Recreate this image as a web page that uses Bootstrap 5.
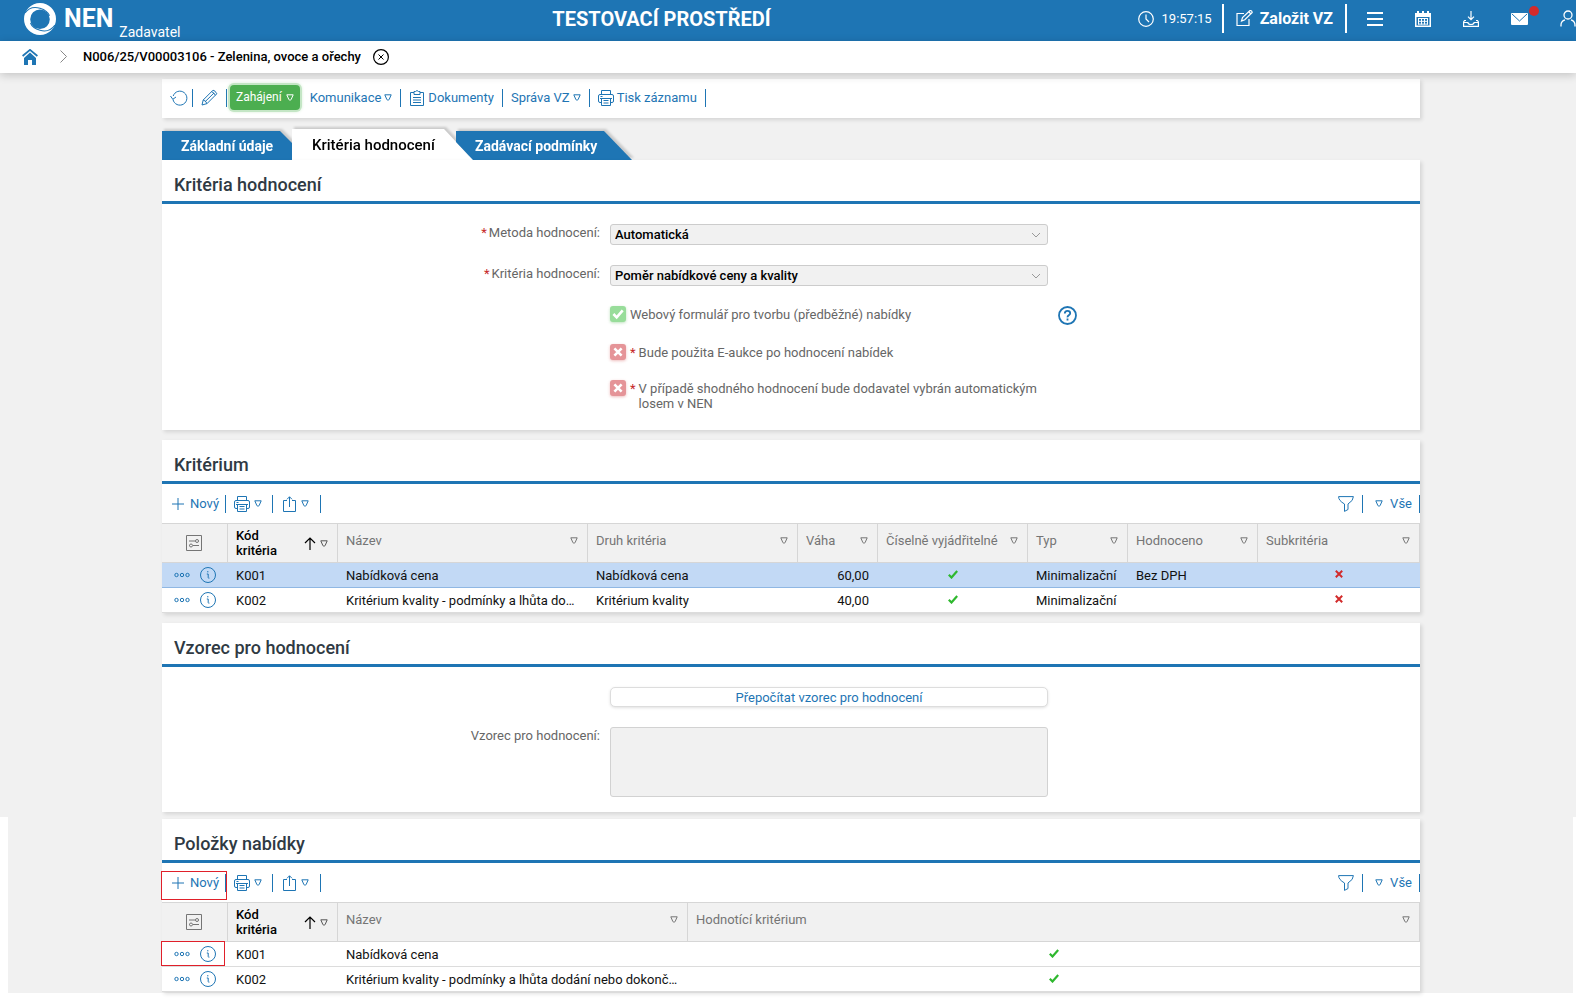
<!DOCTYPE html>
<html lang="cs">
<head>
<meta charset="utf-8">
<meta name="viewport" content="width=device-width, initial-scale=1">
<title>NEN - Kritéria hodnocení</title>
<link href="https://cdn.jsdelivr.net/npm/bootstrap@5.3.0/dist/css/bootstrap.min.css" rel="stylesheet">
<style>
:root{--nen-blue:#1e75b4;--nen-gray:#f1f1f1;--nen-label:#666}
body{font-family:Roboto,"Liberation Sans",sans-serif;font-size:13px;line-height:15px;color:#111;background:#fff;overflow-x:hidden}
svg{display:block;flex:none;fill:none;stroke:currentColor}
a{color:inherit;text-decoration:none}
.bare{background:none;border:0;padding:0;color:inherit;font:inherit;display:flex;align-items:center}
.topbar{background:var(--nen-blue);color:#fff;height:41px;padding-left:24px}
.brand{font-size:25px;line-height:32px;font-weight:700;margin-top:-4px}
.logo{margin-top:-4px}
.role{font-size:14px;line-height:16px;padding-top:22px;margin-left:6px}
.env{font-size:20px;line-height:24px;font-weight:700;padding:0 0 4px 5px}
.rule-w{width:2px;height:29px;background:#fff}
.clock{gap:8px;margin-right:10px}
.create{font-size:16px;line-height:20px;font-weight:700;gap:7px;margin:0 12px}
.tools{gap:32px;margin-left:20px}
.alert-dot{position:absolute;width:10px;height:10px;border-radius:50%;background:#d32a2a;left:18px;top:-7px}
.crumbs{height:32px;padding:0 0 1px 22px;background:#fff;position:relative;z-index:2;box-shadow:0 2px 10px rgba(0,0,0,.2);color:#000}
.crumbs strong{font-weight:500;margin-right:12px}
.chev{color:#888;margin:0 16px 0 22px}
.upper{background:var(--nen-gray);padding:6px 0 5px 6px}
.lower{background:var(--nen-gray);margin:0 3px 5px 8px;padding:2px 0 1px 1px}
.page{max-width:1258px;margin:0 auto}
.panel{background:#fff;box-shadow:2px 2px 4px rgba(0,0,0,.12)}
.gap-below{margin-bottom:10px}
.panel h2{font-size:18px;line-height:24px;font-weight:500;color:#2f3a43;margin:0;padding:13px 12px 4px;border-bottom:3px solid var(--nen-blue)}
.blue{color:var(--nen-blue)}
.sep{width:1px;height:18px;background:var(--nen-blue);flex:none}
.actions{height:39px;padding:0 8px 2px}
.actions .bare{gap:3px}
.start{background:#4cae50;color:#fff;border:0;border-radius:4px;height:25px;padding:0 6px;gap:4px;font-size:12px;line-height:15px;box-shadow:0 0 0 2px #c4e6c5,0 0 4px #8ccf8e;margin:0 10px 0 3px}
.start:hover{background:#43a047;color:#fff}
.tabs{margin-top:11px;filter:drop-shadow(2px -2px 1px rgba(0,0,0,.16))}
.tab{height:29px;background:var(--nen-blue);color:#fff;font-size:14px;font-weight:700;line-height:29px;border:0;padding:1px 0 0 19px;text-align:left}
.tab-a{width:130px;clip-path:polygon(0 0,118px 0,130px 12px,130px 100%,0 100%)}
.tab-b{height:31px;background:#fff;color:#000;font-size:15px;font-weight:500;width:181px;padding-left:20px;line-height:31px;clip-path:polygon(0 0,152px 0,100% 100%,0 100%)}
.tab-c{width:176px;margin-left:-17px;clip-path:polygon(0 0,148px 0,100% 100%,17px 100%,0 11px)}
.form-lines{display:grid;grid-template-columns:438fr 438fr 362fr;column-gap:10px;color:var(--nen-label);padding-top:20px}
.form-lines label.cap{text-align:right;padding-top:1px}
.form-lines label.cap-low{padding-top:5px}
.form-lines .flag{display:flex;gap:4px;align-items:flex-start}
.flag label{display:flex;gap:3px;padding-top:1px}
.req{color:#c62828}
.cap .req{margin-right:2px}
.form-select.pick{height:21px;padding:0 20px 0 4px;font-size:13px;line-height:17px;font-weight:500;color:#000;background-color:#f1f1f1;border:1px solid #ccc;border-radius:3px;background-position:right 6px center;background-size:10px 6px;--bs-form-select-bg-img:url("data:image/svg+xml,%3Csvg xmlns='http://www.w3.org/2000/svg' viewBox='0 0 10 6'%3E%3Cpath fill='none' stroke='%23999' d='M1 1l4 4 4-4'/%3E%3C/svg%3E")}
.tick{appearance:none;width:16px;height:16px;margin:0;flex:none;border-radius:3px;background:#e59498 url("data:image/svg+xml,%3Csvg xmlns='http://www.w3.org/2000/svg' viewBox='0 0 16 16'%3E%3Cpath fill='none' stroke='%23fff' stroke-width='2.6' d='M4.4 4.4l7.2 7.2M11.6 4.4l-7.2 7.2'/%3E%3C/svg%3E");box-shadow:0 1px 3px rgba(200,40,40,.3)}
.tick:checked{background:#98dd9a url("data:image/svg+xml,%3Csvg xmlns='http://www.w3.org/2000/svg' viewBox='0 0 16 16'%3E%3Cpath fill='none' stroke='%23fff' stroke-width='2.6' d='M3.4 8l3.3 3.4 6-7'/%3E%3C/svg%3E");box-shadow:0 1px 3px rgba(40,160,40,.3)}
.recalc{height:20px;font-size:13px;line-height:15px;padding:0;color:var(--nen-blue);border:1px solid #ddd;border-radius:5px;background:#fff;box-shadow:0 1px 3px rgba(0,0,0,.12)}
.formula{height:70px;background:#f1f1f1;border:1px solid #d2d2d2;border-radius:3px;resize:none;padding:4px}
.grid-bar{height:39px}
.grid-bar .add{gap:6px;padding:0 6px 0 10px}
.grid-bar .view{gap:7px;padding:0 7px 0 4px}
.grid-t{width:100%;table-layout:fixed;border-collapse:separate;border-spacing:0;color:#111}
.grid-t th{background:var(--nen-gray);height:40px;border:solid #d6d6d6;border-width:1px 1px 1px 0;padding:0 9px 0 8px;font-weight:400;color:#757575}
.grid-t th.k{color:#000;font-weight:500}
.grid-t td{height:25px;border-bottom:1px solid #dcdcdc;padding:0 9px 0 8px;white-space:nowrap;overflow:hidden}
.grid-t tr.sel td{background:#c2d9f5;border-color:#8fb7e3}
.head{display:flex;align-items:center;justify-content:space-between;padding-bottom:5px;white-space:nowrap}
.row-tools{display:flex;align-items:center;justify-content:flex-end;gap:10px;padding-right:3px;color:var(--nen-blue)}
.yes,.no{margin:0 auto;padding-bottom:2px;box-sizing:content-box}
.yes{color:#2eb82e}
.no{color:#d22b2b}
.mark-box{position:absolute;border:1px solid #e0202a;pointer-events:none}
.m1{left:-1px;top:52px;width:66px;height:29px}
.m2{left:-1px;top:122px;width:64px;height:25px}
</style>
</head>
<body>
<svg width="0" height="0" class="position-absolute">
<symbol id="tri" viewBox="0 0 8 7"><path d="M.8.8h6.4L5.2 5.4q-.2.6-.7.6h-1q-.5 0-.7-.6z"/></symbol>
<symbol id="printer" viewBox="0 0 16 16"><path d="M3.500 4.500v-4h9v4M3.500 12.500h-1.500q-1.500 0-1.500-1.500v-5q0-1.500 1.500-1.500h12q1.500 0 1.500 1.500v5q0 1.500-1.500 1.500h-1.500M3.500 8.500h9v7h-9zM2 8.500h12M2.500 6.500h2M5.500 10.500h5M5.500 13h5"/></symbol>
<symbol id="share" viewBox="0 0 14 16"><path d="M4 4.500H.5v11h12v-11H9M6.500 11V.8M4 3.300L6.500.8 9 3.300"/></symbol>
<symbol id="plus" viewBox="0 0 12 12"><path d="M6 0v12M0 6h12"/></symbol>
<symbol id="funnel" viewBox="0 0 16 16"><path d="M.6.6h14.800q.2 3.900-5.400 7.400v5.500L6.500 15.400V8Q.4 4.500.6.6z"/></symbol>
<symbol id="cols" viewBox="0 0 16 16"><path d="M.5.5h15v15H.5zM3 6h6.500M13 6h-.5M3 10.500h.5M7 10.500h6"/><circle cx="11" cy="6" r="1.500"/><circle cx="5" cy="10.500" r="1.500"/></symbol>
<symbol id="arrow" viewBox="0 0 12 13"><path d="M6 13V1M1 6l5-5 5 5" stroke-width="1.200"/></symbol>
<symbol id="dots" viewBox="0 0 16 6"><circle cx="2.500" cy="3" r="1.700"/><circle cx="8" cy="3" r="1.700"/><circle cx="13.500" cy="3" r="1.700"/></symbol>
<symbol id="info" viewBox="0 0 16 16"><circle cx="8" cy="8" r="7.500"/><path d="M6.800 7h1.400v3.500q0 1 1.200.6M7.800 4v1.400"/></symbol>
<symbol id="yes" viewBox="0 0 10 9"><path d="M.8 4.800l2.700 2.700L9.200 1" stroke-width="2.200"/></symbol>
<symbol id="no" viewBox="0 0 8 8"><path d="M.8.8l6.400 6.400M7.200.8L.8 7.200" stroke-width="2"/></symbol>
</svg>

<header class="topbar d-flex align-items-center justify-content-between">
  <div class="d-flex align-items-center">
    <a href="#" class="d-flex align-items-center gap-2">
      <svg class="logo" width="32" height="32" viewBox="0 0 32 32"><path fill="#fff" stroke="none" fill-rule="evenodd" d="M16 0a16 16 0 1 1 0 32 16 16 0 0 1 0-32zM16 6.500a9.800 9.800 0 1 0 0 19.600 9.800 9.800 0 0 0 0-19.600z"/><path stroke="#1e75b4" stroke-width="1.100" d="M1 10C5 4.500 11 3.800 16 5.300s8 3.500 9.500 7.500M31 22c-4 5.500-10 6.800-15 5.300S8 24 6.500 20"/></svg>
      <span class="brand">NEN</span>
    </a>
    <span class="role">Zadavatel</span>
  </div>
  <div class="env">TESTOVACÍ PROSTŘEDÍ</div>
  <div class="d-flex align-items-center pb-1">
    <div class="d-flex align-items-center clock">
      <svg width="16" height="16" viewBox="0 0 16 16" stroke-width="1.200"><circle cx="8" cy="8" r="7.300"/><path d="M8 3.500V8l3 3"/></svg>
      <time>19:57:15</time>
    </div>
    <span class="rule-w"></span>
    <button type="button" class="bare create">
      <svg width="17" height="17" viewBox="0 0 17 17" stroke-width="1.200"><path d="M8 3.500H1v12h12V9M5.500 11l1-3.500 7.500-7q2 0 2.200 2l-7.400 7.300zM13 2l2 2"/></svg>Založit VZ</button>
    <span class="rule-w"></span>
    <nav class="d-flex align-items-center tools" aria-label="Nástroje">
      <button type="button" class="bare" aria-label="Menu"><svg width="16" height="16" viewBox="0 0 16 16" stroke-width="2"><path d="M0 2h16M0 8h16M0 14h16"/></svg></button>
      <button type="button" class="bare" aria-label="Kalendář"><svg width="16" height="16" viewBox="0 0 16 16"><path fill="#fff" stroke="none" fill-rule="evenodd" d="M0 2h2V0h2v2h3V0h2v2h3V0h2v2h2v14H0zM1.500 6v8.500h13V6z"/><path d="M3 7.500h10M3 10.300h10M3 13.100h10M3.500 7v6.500M6.500 7v6.500M9.500 7v6.500M12.500 7v6.500"/></svg></button>
      <button type="button" class="bare" aria-label="Stažené"><svg width="16" height="16" viewBox="0 0 16 16" stroke-width="1.200"><path d="M8 0v8.500M5 5.700l3 3 3-3M3 9.500H1.500L.6 11v4.400h14.800V11l-.9-1.500H13M.6 11.500h4.200q.5 2 3.200 2t3.200-2h4.200"/></svg></button>
      <button type="button" class="bare position-relative" aria-label="Zprávy"><svg width="17" height="12" viewBox="0 0 17 12"><rect width="17" height="12" rx="1" fill="#fff" stroke="none"/><path stroke="#1e75b4" d="M1 1l7.500 7L16 1"/></svg><span class="alert-dot"></span></button>
      <button type="button" class="bare" aria-label="Uživatel"><svg width="16" height="17" viewBox="0 0 16 17" stroke-width="1.300"><circle cx="8" cy="5" r="4"/><path d="M1 16.500v-1.500q0-4 4-5.200M15 16.500v-1.500q0-4-4-5.200"/></svg></button>
    </nav>
  </div>
</header>

<nav class="crumbs d-flex align-items-center" aria-label="Navigace">
  <a href="#" class="blue" aria-label="Domů"><svg width="16" height="16" viewBox="0 0 16 16"><path fill="currentColor" stroke="none" d="M2 9l6-5.500L14 9v7h-4v-5H6v5H2z"/><path stroke-width="1.800" d="M.6 7L8 .9 15.400 7"/></svg></a>
  <svg class="chev" width="7" height="13" viewBox="0 0 7 13"><path d="M.5.5l6 6-6 6"/></svg>
  <strong>N006/25/V00003106 - Zelenina, ovoce a ořechy</strong>
  <button type="button" class="bare" aria-label="Zavřít"><svg width="16" height="16" viewBox="0 0 16 16"><circle cx="8" cy="8" r="7.400" stroke-width="1.200"/><path d="M5.500 5.500l5 5M10.500 5.500l-5 5"/></svg></button>
</nav>

<div class="upper">
<main class="page">
  <div class="panel actions d-flex align-items-center blue">
    <button type="button" class="bare" aria-label="Obnovit"><svg width="18" height="16" viewBox="0 0 18 16"><path d="M3 9.500a7 7 0 1 0 .2-3.500M.5 6l2.300 3.300L6 7"/></svg></button>
    <span class="sep ms-1 me-2"></span>
    <button type="button" class="bare" aria-label="Upravit"><svg width="17" height="17" viewBox="0 0 17 17"><path d="M1 16l1.200-5L12 1.200q2 0 3.800 3.600L6 14.600zM2.200 11q2.500.5 3.800 3.600M10.500 2.700q2.500.5 3.800 3.600M4 12.800L13 4"/></svg></button>
    <span class="sep ms-2"></span>
    <button type="button" class="btn start d-flex align-items-center">Zahájení <svg width="8" height="7"><use href="#tri"/></svg></button>
    <button type="button" class="bare me-2">Komunikace <svg width="8" height="7"><use href="#tri"/></svg></button>
    <span class="sep me-2"></span>
    <button type="button" class="bare"><svg width="16" height="16" viewBox="0 0 16 16"><path d="M5 2.500H1.500v13h13v-13H11M5 1.500h1.500q1.500-2 3 0H11v3H5zM4 7.500h8M4 10h8M4 12.500h8"/></svg>Dokumenty</button>
    <span class="sep mx-2"></span>
    <button type="button" class="bare me-2">Správa VZ <svg width="8" height="7"><use href="#tri"/></svg></button>
    <span class="sep me-2"></span>
    <button type="button" class="bare"><svg width="16" height="16"><use href="#printer"/></svg>Tisk záznamu</button>
    <span class="sep ms-2"></span>
  </div>

  <div class="tabs d-flex align-items-end" role="tablist">
    <button type="button" role="tab" class="tab tab-a">Základní údaje</button>
    <button type="button" role="tab" aria-selected="true" class="tab tab-b">Kritéria hodnocení</button>
    <button type="button" role="tab" class="tab tab-c">Zadávací podmínky</button>
  </div>

  <section class="panel gap-below position-relative" style="padding-bottom:19px">
    <h2>Kritéria hodnocení</h2>
    <div class="form-lines">
      <label class="cap" for="method"><span class="req">*</span>Metoda hodnocení:</label>
      <select id="method" class="form-select pick mb-3"><option>Automatická</option></select><span></span>
      <label class="cap cap-low" for="crit"><span class="req">*</span>Kritéria hodnocení:</label>
      <select id="crit" class="form-select pick mt-1"><option>Poměr nabídkové ceny a kvality</option></select><span></span>
    </div>
    <div class="form-lines">
      <span></span>
      <div class="flag"><input class="tick" type="checkbox" id="web" checked><label for="web">Webový formulář pro tvorbu (předběžné) nabídky</label></div>
      <button type="button" class="bare blue align-self-start" aria-label="Nápověda"><svg width="19" height="19" viewBox="0 0 19 19" stroke-width="1.800"><circle cx="9.500" cy="9.500" r="8.500"/><path d="M6.800 7.500q0-2.600 2.700-2.600t2.700 2.400q0 1-1.400 2t-1.300 2M9.500 12.500v2"/></svg></button>
      <span></span>
      <div class="flag" style="padding-top:19px"><input class="tick" type="checkbox" id="auction"><label for="auction"><span class="req">*</span><span>Bude použita E-aukce po hodnocení nabídek</span></label></div><span></span>
      <span></span>
      <div class="flag" style="padding-top:20px"><input class="tick" type="checkbox" id="draw"><label for="draw"><span class="req">*</span><span>V případě shodného hodnocení bude dodavatel vybrán automatickým losem v NEN</span></label></div><span></span>
    </div>
  </section>

  <section class="panel gap-below">
    <h2>Kritérium</h2>
    <div class="grid-bar d-flex align-items-center blue">
      <button type="button" class="bare add"><svg width="12" height="12"><use href="#plus"/></svg>Nový</button>
      <span class="sep me-2"></span>
      <button type="button" class="bare gap-1" aria-label="Tisk"><svg width="16" height="16"><use href="#printer"/></svg><svg width="8" height="7"><use href="#tri"/></svg></button>
      <span class="sep" style="margin:0 10px"></span>
      <button type="button" class="bare gap-1" aria-label="Export"><svg width="14" height="16"><use href="#share"/></svg><svg width="8" height="7"><use href="#tri"/></svg></button>
      <span class="sep" style="margin-left:11px"></span>
      <button type="button" class="bare ms-auto me-2" aria-label="Filtr"><svg width="16" height="16"><use href="#funnel"/></svg></button>
      <span class="sep me-2"></span>
      <button type="button" class="bare view"><svg width="8" height="7"><use href="#tri"/></svg>Vše</button>
      <span class="sep"></span>
    </div>
    <table class="grid-t">
      <colgroup><col style="width:66px"><col style="width:110px"><col style="width:250px"><col style="width:210px"><col style="width:80px"><col style="width:150px"><col style="width:100px"><col style="width:130px"><col></colgroup>
      <thead><tr>
        <th scope="col"><svg class="mx-auto" width="16" height="16"><use href="#cols"/></svg></th>
        <th scope="col" class="k"><div class="d-flex align-items-center"><span>Kód<br>kritéria</span><svg class="ms-auto me-1" width="12" height="13"><use href="#arrow"/></svg><svg width="8" height="7" color="#555"><use href="#tri"/></svg></div></th>
        <th scope="col"><div class="head">Název<svg width="8" height="7"><use href="#tri"/></svg></div></th>
        <th scope="col"><div class="head">Druh kritéria<svg width="8" height="7"><use href="#tri"/></svg></div></th>
        <th scope="col"><div class="head">Váha<svg width="8" height="7"><use href="#tri"/></svg></div></th>
        <th scope="col"><div class="head">Číselně vyjádřitelné<svg width="8" height="7"><use href="#tri"/></svg></div></th>
        <th scope="col"><div class="head">Typ<svg width="8" height="7"><use href="#tri"/></svg></div></th>
        <th scope="col"><div class="head">Hodnoceno<svg width="8" height="7"><use href="#tri"/></svg></div></th>
        <th scope="col"><div class="head">Subkritéria<svg width="8" height="7"><use href="#tri"/></svg></div></th>
      </tr></thead>
      <tbody>
      <tr class="sel"><td><div class="row-tools"><svg width="16" height="6"><use href="#dots"/></svg><svg width="16" height="16"><use href="#info"/></svg></div></td><td>K001</td><td>Nabídková cena</td><td>Nabídková cena</td><td class="text-end">60,00</td><td><svg class="yes" width="10" height="9"><use href="#yes"/></svg></td><td>Minimalizační</td><td>Bez DPH</td><td><svg class="no" width="8" height="8"><use href="#no"/></svg></td></tr>
      <tr><td><div class="row-tools"><svg width="16" height="6"><use href="#dots"/></svg><svg width="16" height="16"><use href="#info"/></svg></div></td><td>K002</td><td>Kritérium kvality - podmínky a lhůta do…</td><td>Kritérium kvality</td><td class="text-end">40,00</td><td><svg class="yes" width="10" height="9"><use href="#yes"/></svg></td><td>Minimalizační</td><td></td><td><svg class="no" width="8" height="8"><use href="#no"/></svg></td></tr>
      </tbody>
    </table>
  </section>

  <section class="panel" style="padding-bottom:15px">
    <h2>Vzorec pro hodnocení</h2>
    <div class="form-lines" style="row-gap:20px">
      <span></span><button type="button" class="btn recalc">Přepočítat vzorec pro hodnocení</button><span></span>
      <label class="cap" for="formula">Vzorec pro hodnocení:</label><textarea id="formula" class="formula" readonly></textarea><span></span>
    </div>
  </section>
</main>
</div>

<div class="lower">
<div class="page">
  <section class="panel position-relative">
    <h2>Položky nabídky</h2>
    <div class="grid-bar d-flex align-items-center blue">
      <button type="button" class="bare add"><svg width="12" height="12"><use href="#plus"/></svg>Nový</button>
      <span class="sep me-2"></span>
      <button type="button" class="bare gap-1" aria-label="Tisk"><svg width="16" height="16"><use href="#printer"/></svg><svg width="8" height="7"><use href="#tri"/></svg></button>
      <span class="sep" style="margin:0 10px"></span>
      <button type="button" class="bare gap-1" aria-label="Export"><svg width="14" height="16"><use href="#share"/></svg><svg width="8" height="7"><use href="#tri"/></svg></button>
      <span class="sep" style="margin-left:11px"></span>
      <button type="button" class="bare ms-auto me-2" aria-label="Filtr"><svg width="16" height="16"><use href="#funnel"/></svg></button>
      <span class="sep me-2"></span>
      <button type="button" class="bare view"><svg width="8" height="7"><use href="#tri"/></svg>Vše</button>
      <span class="sep"></span>
    </div>
    <table class="grid-t">
      <colgroup><col style="width:66px"><col style="width:110px"><col style="width:350px"><col></colgroup>
      <thead><tr>
        <th scope="col"><svg class="mx-auto" width="16" height="16"><use href="#cols"/></svg></th>
        <th scope="col" class="k"><div class="d-flex align-items-center"><span>Kód<br>kritéria</span><svg class="ms-auto me-1" width="12" height="13"><use href="#arrow"/></svg><svg width="8" height="7" color="#555"><use href="#tri"/></svg></div></th>
        <th scope="col"><div class="head">Název<svg width="8" height="7"><use href="#tri"/></svg></div></th>
        <th scope="col"><div class="head">Hodnotící kritérium<svg width="8" height="7"><use href="#tri"/></svg></div></th>
      </tr></thead>
      <tbody>
      <tr><td><div class="row-tools"><svg width="16" height="6"><use href="#dots"/></svg><svg width="16" height="16"><use href="#info"/></svg></div></td><td>K001</td><td>Nabídková cena</td><td><svg class="yes" width="10" height="9"><use href="#yes"/></svg></td></tr>
      <tr><td><div class="row-tools"><svg width="16" height="6"><use href="#dots"/></svg><svg width="16" height="16"><use href="#info"/></svg></div></td><td>K002</td><td>Kritérium kvality - podmínky a lhůta dodání nebo dokonč…</td><td><svg class="yes" width="10" height="9"><use href="#yes"/></svg></td></tr>
      </tbody>
    </table>
    <span class="mark-box m1"></span>
    <span class="mark-box m2"></span>
  </section>
</div>
</div>
<script src="https://cdn.jsdelivr.net/npm/bootstrap@5.3.0/dist/js/bootstrap.bundle.min.js"></script>
</body>
</html>
